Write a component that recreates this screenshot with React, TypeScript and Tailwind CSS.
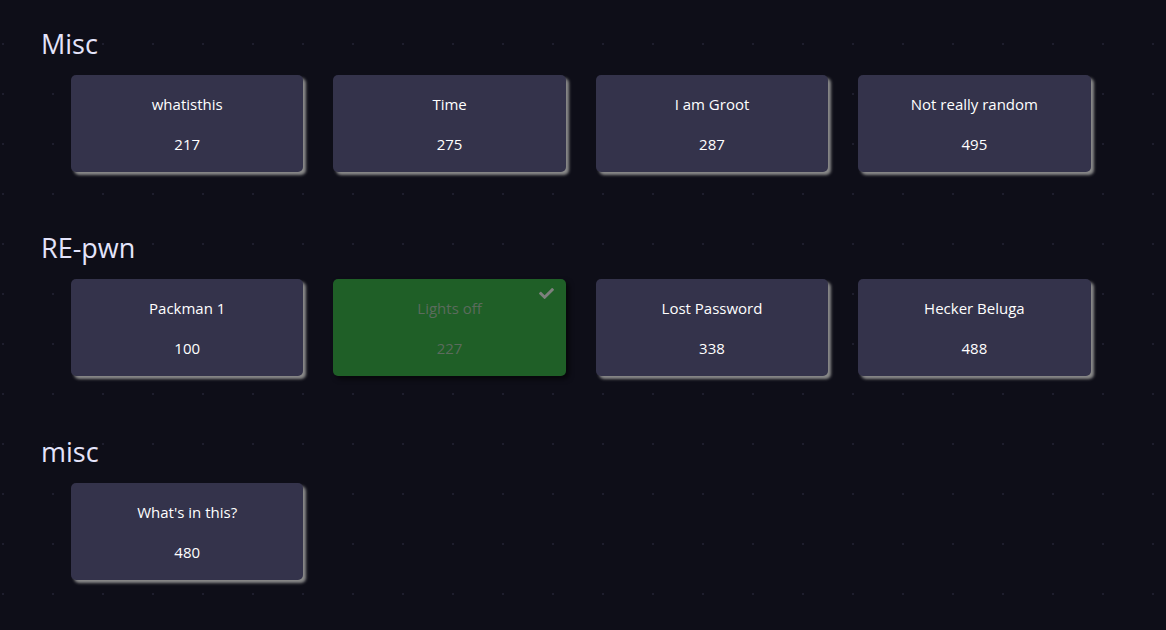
import React from 'react';
import { FaCheck } from 'react-icons/fa';

interface Challenge {
  name: string;
  points: number;
  solved?: boolean;
}

interface Category {
  title: string;
  challenges: Challenge[];
}

const categories: Category[] = [
  {
    title: 'Misc',
    challenges: [
      { name: 'whatisthis', points: 217 },
      { name: 'Time', points: 275 },
      { name: 'I am Groot', points: 287 },
      { name: 'Not really random', points: 495 },
    ],
  },
  {
    title: 'RE-pwn',
    challenges: [
      { name: 'Packman 1', points: 100 },
      { name: 'Lights off', points: 227, solved: true },
      { name: 'Lost Password', points: 338 },
      { name: 'Hecker Beluga', points: 488 },
    ],
  },
  {
    title: 'misc',
    challenges: [{ name: "What's in this?", points: 480 }],
  },
];

const ChallengeCard: React.FC<{ challenge: Challenge }> = ({ challenge }) => {
  if (challenge.solved) {
    return (
      <div className="relative h-[97px] rounded-[5px] bg-[#1f5f27] text-[#5b6b5d] flex flex-col items-center shadow-[3px_3px_5px_rgba(0,0,0,0.6)]">
        <FaCheck className="absolute right-[12px] top-[7px] text-[#7d807d] w-[15px] h-[15px]" />
        <div className="mt-[19px] text-[15px] leading-[20px]">{challenge.name}</div>
        <div className="mt-[20px] text-[15px] leading-[20px]">{challenge.points}</div>
      </div>
    );
  }
  return (
    <div className="h-[97px] rounded-[5px] bg-[#34334b] text-white flex flex-col items-center shadow-[3px_3px_3px_#8a8a8a]">
      <div className="mt-[19px] text-[15px] leading-[20px]">{challenge.name}</div>
      <div className="mt-[20px] text-[15px] leading-[20px]">{challenge.points}</div>
    </div>
  );
};

export default function App() {
  return (
    <div
      className="min-h-screen bg-[#0e0e18] bg-[radial-gradient(circle,#1e1e2d_1px,transparent_1.2px)] bg-[length:50px_50px] bg-[position:-22px_19px] pl-[41px] pt-[24px]"
      style={{ fontFamily: '"Open Sans", "Noto Sans", sans-serif' }}
    >
      {categories.map((cat) => (
        <section key={cat.title} className="mb-[56px]">
          <h2 className="text-[27px] leading-[40px] text-[#e4e4fb] mb-[11px]">{cat.title}</h2>
          <div className="ml-[30px] grid grid-cols-[repeat(4,232.4px)] gap-x-[30px]">
            {cat.challenges.map((ch) => (
              <ChallengeCard key={ch.name} challenge={ch} />
            ))}
          </div>
        </section>
      ))}
    </div>
  );
}
